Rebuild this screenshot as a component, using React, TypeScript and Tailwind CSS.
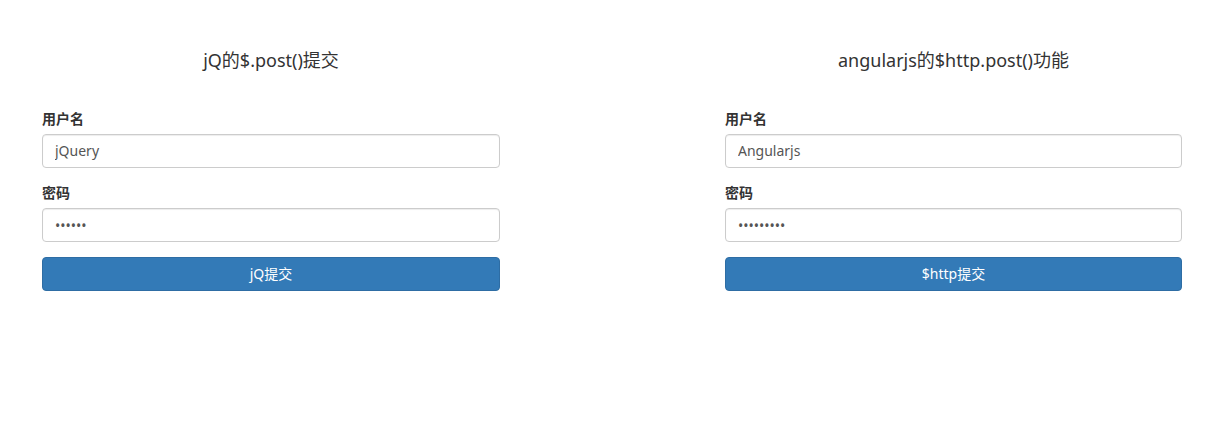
import React from "react";

const font = { fontFamily: '"Noto Sans", "Noto Sans CJK SC", sans-serif' };

function Panel({ title, user, pwd, btn, wide }: { title: string; user: string; pwd: string; btn: string; wide: boolean }) {
  return (
    <div className={wide ? "w-[458px]" : "w-[457px]"}>
      <h3 className="text-[18px] leading-[20px] text-[#333] text-center h-[20px]">{title}</h3>
      <form className="mt-[39px]" onSubmit={(e) => e.preventDefault()}>
        <div className="mb-[15px]">
          <label className="block text-[14px] leading-[20px] font-bold text-[#333] mb-[5px]">用户名</label>
          <input
            className="block w-full h-[34px] px-[12px] pt-[5px] pb-[7px] text-[14px] text-[#555] bg-white border border-[#ccc] rounded-[4px] shadow-[inset_0_1px_1px_rgba(0,0,0,0.075)] outline-none"
            style={font}
            defaultValue={user}
          />
        </div>
        <div className="mb-[15px]">
          <label className="block text-[14px] leading-[20px] font-bold text-[#333] mb-[5px]">密码</label>
          <input
            type="password"
            className="block w-full h-[34px] px-[12px] py-[6px] text-[14px] text-[#555] bg-white border border-[#ccc] rounded-[4px] shadow-[inset_0_1px_1px_rgba(0,0,0,0.075)] outline-none"
            style={font}
            defaultValue={pwd}
          />
        </div>
        <button
          type="button"
          className="block w-full h-[34px] text-[14px] leading-[20px] text-white bg-[#337ab7] border border-[#2e6da4] rounded-[4px]"
          style={font}
        >
          {btn}
        </button>
      </form>
    </div>
  );
}

export default function App() {
  return (
    <div className="w-[1226px] h-[438px] bg-white" style={font}>
      <div className="flex pt-[50px] pl-[42px] gap-[225px]">
        <Panel wide title="jQ的$.post()提交" user="jQuery" pwd="123456" btn="jQ提交" />
        <Panel wide={false} title="angularjs的$http.post()功能" user="Angularjs" pwd="123456789" btn="$http提交" />
      </div>
    </div>
  );
}
